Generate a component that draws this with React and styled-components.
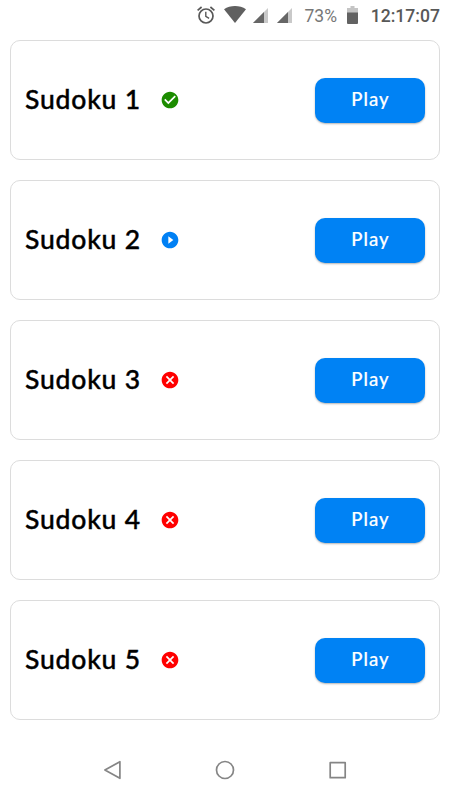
import styled, { createGlobalStyle } from "styled-components";
import { MdCheckCircle, MdPlayCircleFilled, MdCancel } from "react-icons/md";

const sudokus = [
  { id: 1, status: "done" },
  { id: 2, status: "started" },
  { id: 3, status: "failed" },
  { id: 4, status: "failed" },
  { id: 5, status: "failed" },
];

const statusIcons = {
  done: { Icon: MdCheckCircle, color: "#1c8c00" },
  started: { Icon: MdPlayCircleFilled, color: "#0080f4" },
  failed: { Icon: MdCancel, color: "#ff0000" },
};

const Signal = () => (
  <svg width="15" height="15" viewBox="0 0 15 15">
    <path d="M0 15L15 0V15Z" fill="#c9c9c9" />
    <path d="M0 15L11 4V15Z" fill="#666" />
  </svg>
);

const App = () => {
  return (
    <>
      <GlobalStyle />
      <Screen>
        {/* status bar start*/}
        <StatusBar>
          <svg width="18" height="18" viewBox="0 0 18 18">
            <g fill="none" stroke="#585858" strokeWidth="1.7">
              <circle cx="9" cy="10" r="7" />
              <path d="M8.8 5.8v4.6l3.3 2" strokeWidth="1.4" />
              <path d="M.6 4.3L4.6 1M17.4 4.3L13.4 1" />
            </g>
          </svg>
          <Wifi width="22" height="17" viewBox="0 0 22 17">
            <path d="M0 3.2C3.2.9 7 0 11 0s7.8.9 11 3.2L11 17Z" fill="#606060" />
          </Wifi>
          <Signals>
            <Signal />
            <Signal />
          </Signals>
          <Percent>73%</Percent>
          <svg width="11" height="18" viewBox="0 0 11 18">
            <path d="M3.5 0h4v2H11v5H0V2h3.5Z" fill="#c4c4c4" />
            <path d="M0 6.5h11V17a1 1 0 0 1-1 1H1a1 1 0 0 1-1-1Z" fill="#626262" />
          </svg>
          <Clock>12:17:07</Clock>
        </StatusBar>
        {/* status bar end*/}

        <List>
          {sudokus.map(({ id, status }) => {
            const { Icon, color } = statusIcons[status];
            return (
              <Card key={id}>
                <Title>Sudoku {id}</Title>
                <Status $color={color}>
                  <Icon />
                </Status>
                <PlayButton>Play</PlayButton>
              </Card>
            );
          })}
        </List>

        {/* system navigation */}
        <NavBar>
          <svg width="20" height="20" viewBox="0 0 20 20">
            <path d="M2.9 10L17.9 1.7V18.3Z" />
          </svg>
          <svg width="20" height="20" viewBox="0 0 20 20">
            <circle cx="10" cy="10" r="8.5" />
          </svg>
          <svg width="20" height="20" viewBox="0 0 20 20">
            <path d="M2.2 2.7h15v15h-15Z" />
          </svg>
        </NavBar>
      </Screen>
    </>
  );
};

const GlobalStyle = createGlobalStyle`
  * {
    box-sizing: border-box;
  }

  body {
    margin: 0;
    background: #fff;
    overflow: hidden;
  }
`;

const Screen = styled.main`
  width: 450px;
  height: 800px;
  display: flex;
  flex-direction: column;
  font-family: Lato, "Open Sans", sans-serif;
`;

const StatusBar = styled.header`
  height: 40px;
  padding: 6px 10px 0 197px;
  display: flex;
  align-items: flex-start;
  font-family: Roboto, sans-serif;
  font-size: 18px;
  line-height: 20px;

  svg {
    flex: none;
  }
`;

const Wifi = styled.svg`
  margin: 0 7px 0 9px;
`;

const Signals = styled.div`
  display: flex;
  gap: 9px;
  margin-top: 2px;
`;

const Percent = styled.span`
  width: 42.5px;
  margin-left: 12.5px;
  color: #777;
  font-size: 17.5px;
`;

const Clock = styled.span`
  margin-left: 13px;
  color: #585858;
  font-size: 17.6px;
  font-weight: 500;
  white-space: nowrap;
`;

const List = styled.section`
  display: flex;
  flex-direction: column;
  gap: 20px;
  padding: 0 10px;
`;

const Card = styled.article`
  height: 120px;
  padding: 0 14px;
  display: flex;
  align-items: center;
  border: 1px solid #dcdcdc;
  border-radius: 10px;
`;

const Title = styled.h2`
  width: 134.5px;
  margin: 0;
  padding-bottom: 2px;
  color: #000;
  font-size: 26.5px;
  font-weight: 500;
  line-height: 32px;
  letter-spacing: 0.8px;
  white-space: nowrap;
  -webkit-text-stroke: 0.4px #000;
`;

const Status = styled.span`
  display: flex;
  color: ${({ $color }) => $color};
  font-size: 20px;
`;

const PlayButton = styled.button`
  width: 110px;
  height: 45px;
  margin-left: auto;
  padding: 0 0 2px;
  border: none;
  border-radius: 10px;
  background: #0082f4;
  box-shadow: 0 1px 2px rgba(0, 0, 0, 0.3);
  color: #fff;
  font-family: inherit;
  font-size: 18.5px;
  font-weight: 500;
  letter-spacing: 1.1px;
  text-indent: 1px;
  -webkit-text-stroke: 0.2px #fff;
`;

const NavBar = styled.nav`
  height: 60px;
  margin-top: 20px;
  padding: 0 102px;
  display: flex;
  align-items: center;
  justify-content: space-between;

  svg {
    fill: none;
    stroke: #858585;
    stroke-width: 1.7;
    stroke-linejoin: round;
  }
`;

export default App;
